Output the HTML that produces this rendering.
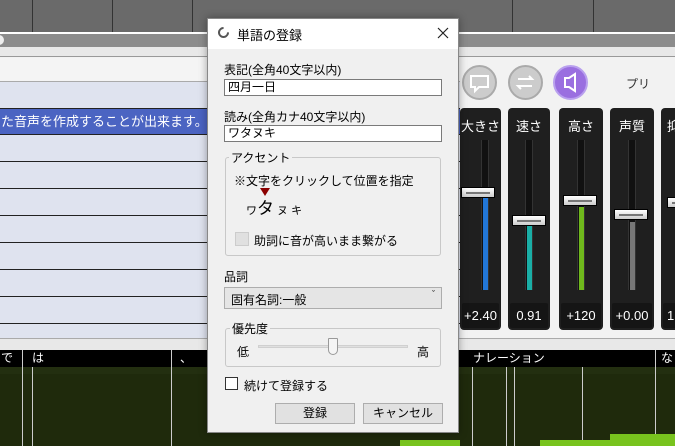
<!DOCTYPE html>
<html><head><meta charset="utf-8"><style>
*{box-sizing:border-box;margin:0;padding:0}
body{width:675px;height:446px;overflow:hidden;position:relative;background:#f2f2f2;font-family:"Liberation Sans","Noto Sans CJK JP",sans-serif;font-size:12px;color:#000}
.a{position:absolute}
.row{position:absolute;left:0;width:460px;height:27px;background:#dfe3ef;border-bottom:1px solid #222}
.sl{position:absolute;top:108px;height:222px;background:#1f1f1f;border-radius:4px}
.sl .lb{position:absolute;top:8px;width:100%;text-align:center;color:#fff;font-size:13px}
.sl .tr{position:absolute;top:32px;height:150px;width:8px;background:#111;border-left:1px solid #333;border-right:1px solid #333}
.sl .fill{position:absolute;bottom:0;left:1px;width:5px}
.sl .th{position:absolute;width:34px;height:11px;background:linear-gradient(#fff,#ccc);border:1px solid #000}
.sl .th:after{content:"";position:absolute;left:4px;right:4px;top:4px;height:2px;background:#777}
.sl .v{position:absolute;top:195px;left:2px;right:2px;height:25px;background:#151515;color:#fff;font-size:13px;text-align:center;line-height:25px;border-radius:2px}
.circ{position:absolute;top:65px;width:35px;height:35px;border-radius:50%;background:#ccc;border:2px solid #aaa}
.tl{position:absolute;top:350px;height:17px;background:#000;color:#fff;font-size:12px;line-height:17px}
.vl{position:absolute;width:1px;background:#ccc}
.inp{position:absolute;left:224px;width:218px;height:17px;background:#fff;border:1px solid #7a7a7a;font-size:12px;line-height:15px;padding-left:3px}
.grp{position:absolute;left:225px;width:216px;border:1px solid #c8c8c8;border-radius:3px}
.btn{position:absolute;top:403px;height:21px;background:#e1e1e1;border:1px solid #adadad;text-align:center;line-height:19px;font-size:12px}
</style></head><body>
<div class="a" style="left:0;top:0;width:675px;height:32px;background:#6a6a6a"></div>
<div class="a" style="left:32px;top:0;width:1px;height:32px;background:#333"></div>
<div class="a" style="left:112px;top:0;width:1px;height:32px;background:#333"></div>
<div class="a" style="left:192px;top:0;width:1px;height:32px;background:#333"></div>
<div class="a" style="left:512px;top:0;width:1px;height:32px;background:#333"></div>
<div class="a" style="left:593px;top:0;width:1px;height:32px;background:#333"></div>
<div class="a" style="left:0;top:32px;width:675px;height:15px;background:#8c8c8c;border-top:2px solid #fff"></div>
<div class="a" style="left:-6px;top:35px;width:10px;height:10px;border-radius:50%;background:#eee"></div>
<div class="a" style="left:0;top:47px;width:675px;height:10px;background:#e8e8e8;border-bottom:1px solid #999"></div>
<div class="a" style="left:0;top:58px;width:460px;height:24px;background:#f4f4f4;border-bottom:1px solid #aaa"></div>
<div class="row" style="top:82px"></div>
<div class="row" style="top:108px;background:#4b64c2;border-top:1px solid #222;color:#fff;font-size:13px;line-height:25px;padding-left:1px">た音声を作成することが出来ます。</div>
<div class="row" style="top:135px"></div><div class="row" style="top:162px"></div><div class="row" style="top:189px"></div><div class="row" style="top:216px"></div><div class="row" style="top:243px"></div><div class="row" style="top:270px"></div><div class="row" style="top:297px"></div>
<div class="row" style="top:324px;height:14px;border:none"></div>
<div class="a" style="left:0;top:338px;width:675px;height:12px;background:#e8e8e8;border-top:1px solid #aaa"></div>
<div class="circ" style="left:462px"></div>
<div class="circ" style="left:508px"></div>
<div class="circ" style="left:553px;background:#9a6fe0;border-color:#b9a0ee"></div>
<svg class="a" style="left:462px;top:65px" width="130" height="35" viewBox="0 0 130 35">
<path d="M9 11h17v11h-9l-4 4v-4h-4z" fill="none" stroke="#fff" stroke-width="2"/>
<path d="M56 14h14l-3-3M70 21h-14l3 3" fill="none" stroke="#fff" stroke-width="2"/>
<path d="M103 13h4l6-4v17l-6-4h-4z" fill="none" stroke="#fff" stroke-width="2"/>
</svg>
<div class="a" style="left:626px;top:75px;font-size:12px;color:#333">プリ</div>
<div class="sl" style="left:460px;width:41px"><div class="lb">大きさ</div><div class="tr" style="left:21px"><div class="fill" style="height:92px;background:#2277d8"></div></div><div class="th" style="left:1px;top:79px"></div><div class="v">+2.40</div></div>
<div class="sl" style="left:508px;width:42px"><div class="lb">速さ</div><div class="tr" style="left:17px"><div class="fill" style="height:64px;background:#1aaea6"></div></div><div class="th" style="left:4px;top:107px"></div><div class="v">0.91</div></div>
<div class="sl" style="left:559px;width:44px"><div class="lb">高さ</div><div class="tr" style="left:18px"><div class="fill" style="height:83px;background:#6fb81c"></div></div><div class="th" style="left:4px;top:87px"></div><div class="v">+120</div></div>
<div class="sl" style="left:610px;width:44px"><div class="lb">声質</div><div class="tr" style="left:18px"><div class="fill" style="height:68px;background:#777"></div></div><div class="th" style="left:4px;top:101px"></div><div class="v">+0.00</div></div>
<div class="sl" style="left:661px;width:20px"><div class="lb" style="text-align:left;padding-left:6px">抑</div><div class="th" style="left:6px;top:89px"></div><div class="v" style="text-align:left;padding-left:4px">1</div></div>
<div class="a" style="left:0;top:367px;width:675px;height:79px;background:#1f2a0c"></div>
<div class="a" style="left:0;top:367px;width:675px;height:7px;background:#232f10"></div>
<div class="tl" style="left:0;width:460px;padding-left:1px">で<span style="position:absolute;left:32px">は</span><span style="position:absolute;left:180px">、</span></div>
<div class="tl" style="left:460px;width:215px;padding-left:13px">ナレーション<span style="position:absolute;left:201px">な</span></div>
<div class="vl" style="left:22px;top:350px;height:96px"></div>
<div class="vl" style="left:32px;top:367px;height:79px"></div>
<div class="vl" style="left:171px;top:350px;height:96px"></div>
<div class="vl" style="left:472px;top:367px;height:79px"></div>
<div class="vl" style="left:506px;top:367px;height:79px"></div>
<div class="vl" style="left:514px;top:367px;height:79px"></div>
<div class="vl" style="left:582px;top:367px;height:79px"></div>
<div class="vl" style="left:655px;top:350px;height:96px"></div>
<div class="a" style="left:400px;top:440px;width:60px;height:6px;background:#78c31e"></div>
<div class="a" style="left:540px;top:440px;width:135px;height:6px;background:#78c31e"></div>
<div class="a" style="left:610px;top:434px;width:65px;height:12px;background:#78c31e"></div>
<div class="a" style="left:207px;top:18px;width:252px;height:415px;background:#f0f0f0;border:1px solid #888;box-shadow:0 0 8px rgba(0,0,0,.35)"></div>
<div class="a" style="left:208px;top:19px;width:250px;height:30px;background:#fff"></div>
<div class="a" style="left:218px;top:27px;width:11px;height:11px;border:2px solid #555;border-radius:50%;border-top-color:transparent;transform:rotate(45deg)"></div>
<div class="a" style="left:237px;top:25px;font-size:13px">単語の登録</div>
<svg class="a" style="left:437px;top:27px" width="12" height="12"><path d="M1 1L11 11M11 1L1 11" stroke="#222" stroke-width="1.2"/></svg>
<div class="a" style="left:224px;top:61px">表記(全角40文字以内)</div>
<div class="inp" style="top:79px">四月一日</div>
<div class="a" style="left:224px;top:108px">読み(全角カナ40文字以内)</div>
<div class="inp" style="top:125px">ワタヌキ</div>
<div class="grp" style="top:157px;height:99px"></div>
<div class="a" style="left:229px;top:149px;background:#f0f0f0;padding:0 2px">アクセント</div>
<div class="a" style="left:234px;top:172px">※文字をクリックして位置を指定</div>
<div class="a" style="left:260px;top:188px;width:0;height:0;border-left:5px solid transparent;border-right:5px solid transparent;border-top:8px solid #8b0000"></div>
<div class="a" style="left:246px;top:199px;font-size:11px;line-height:20px">ワ<span style="font-size:17px">タ</span> ヌ キ</div>
<div class="a" style="left:235px;top:232px;width:14px;height:14px;background:#e0e0e0;border:1px solid #ccc"></div>
<div class="a" style="left:254px;top:232px">助詞に音が高いまま繋がる</div>
<div class="a" style="left:224px;top:268px">品詞</div>
<div class="a" style="left:224px;top:287px;width:218px;height:22px;background:#e5e5e5;border:1px solid #adadad;padding:3px 0 0 6px;font-size:12px">固有名詞:一般<span style="position:absolute;right:6px;top:1px;font-size:9px">ˇ</span></div>
<div class="grp" style="top:328px;height:39px"></div>
<div class="a" style="left:230px;top:320px;background:#f0f0f0;padding:0 2px">優先度</div>
<div class="a" style="left:237px;top:343px">低</div>
<div class="a" style="left:417px;top:343px">高</div>
<div class="a" style="left:258px;top:345px;width:150px;height:3px;background:#e0e0e0;border:1px solid #d0d0d0"></div>
<div class="a" style="left:328px;top:338px;width:10px;height:17px;background:#f5f5f5;border:1px solid #999;border-radius:1px 1px 5px 5px"></div>
<div class="a" style="left:225px;top:377px;width:13px;height:13px;background:#fff;border:1px solid #333"></div>
<div class="a" style="left:244px;top:377px">続けて登録する</div>
<div class="btn" style="left:275px;width:80px">登録</div>
<div class="btn" style="left:363px;width:80px">キャンセル</div>
</body></html>
